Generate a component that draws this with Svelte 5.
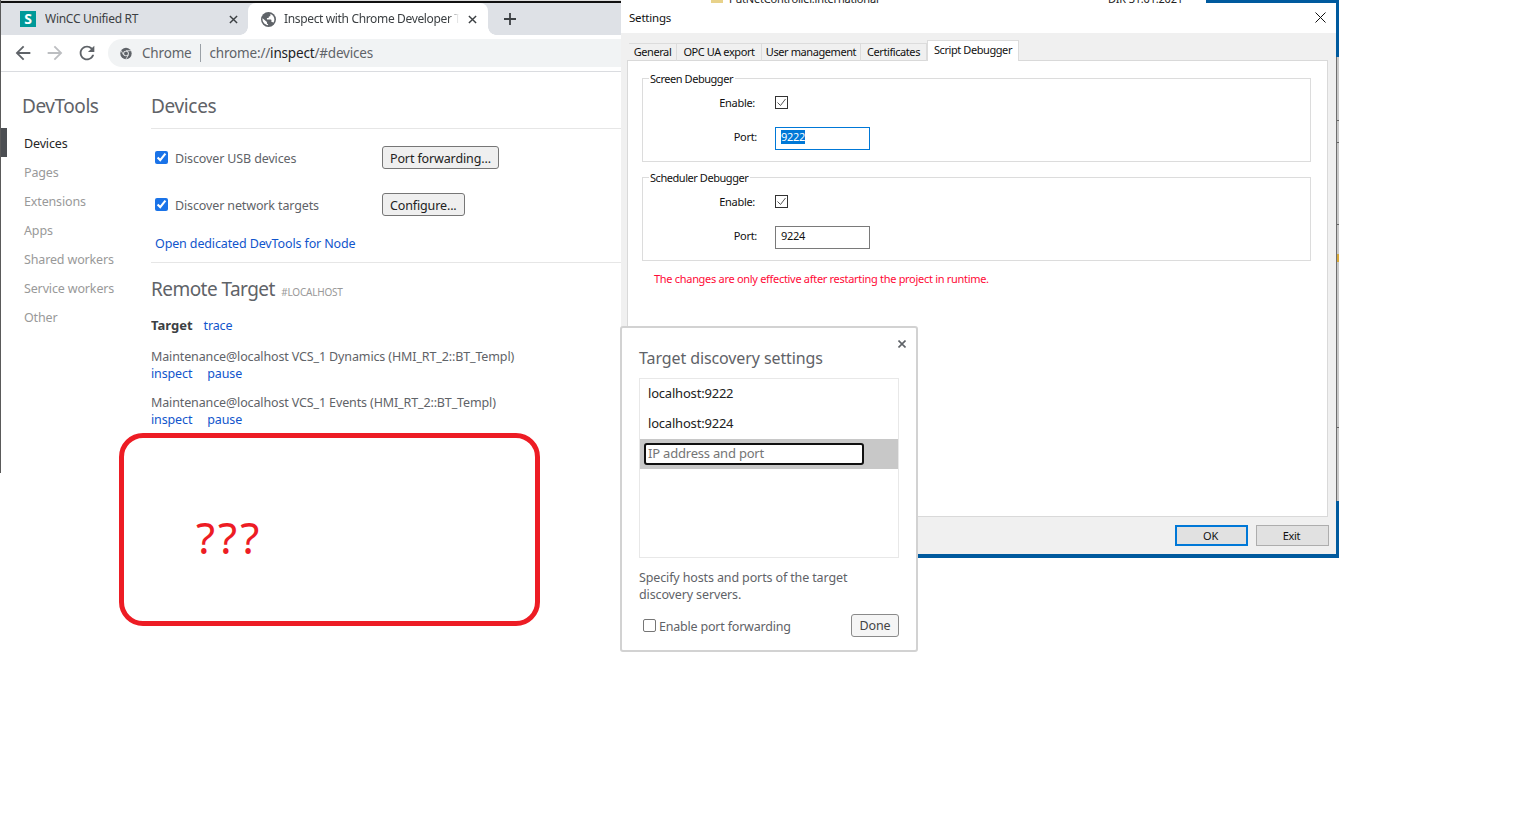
<script>
  const sideItems = ['Devices', 'Pages', 'Extensions', 'Apps', 'Shared workers', 'Service workers', 'Other']
  const tabs = ['General', 'OPC UA export', 'User management', 'Certificates', 'Script Debugger']
  const targets = [
    'Maintenance@localhost VCS_1 Dynamics (HMI_RT_2::BT_Templ)',
    'Maintenance@localhost VCS_1 Events (HMI_RT_2::BT_Templ)'
  ]
  const debuggers = [
    { name: 'Screen Debugger', port: '9222', focused: true },
    { name: 'Scheduler Debugger', port: '9224', focused: false }
  ]
</script>

<div class="desktop">
  <div class="backdrop">
    <span class="folder"></span>
    <span class="cut-name">PutNetController.lnternational</span>
    <span class="cut-date">DIR 31.01.2021</span>
    <span class="cut-blue"></span>
  </div>
  <div class="edge">
    <div class="edge-blue top"></div>
    <div class="edge-gray"></div>
    <div class="edge-blue bottom"></div>
  </div>

  <section class="chrome">
    <div class="top-line"></div>
    <div class="tabstrip">
      <div class="tab first">
        <span class="favicon">S</span>
        <span class="tab-title">WinCC Unified RT</span>
        <svg class="tab-x" viewBox="0 0 10 10"><path d="M1 1l8 8M9 1l-8 8" /></svg>
      </div>
      <div class="tab active">
        <svg class="globe" viewBox="0 0 24 24">
          <circle cx="12" cy="12" r="12" fill="#5f6368" />
          <path fill="#fff" d="M2.500 10l7 6v1.500c0 1 .8 1.500 1.800 1.500v2c-4.500-.3-8.500-4-8.900-8.500-.1-.9-.1-1.700.1-2.500zM15 3.200c3.700 1.200 6.400 4.700 6.400 8.800 0 2-.6 3.800-1.700 5.300-.4-.8-1.100-1.300-2-1.300h-1v-3c0-.6-.4-1-1-1H9.500V9.500h2c.6 0 1-.4 1-1V7h1c.8 0 1.500-.6 1.500-1.500z" />
        </svg>
        <span class="tab-title fade">Inspect with Chrome Developer Tools</span>
        <svg class="tab-x" viewBox="0 0 10 10"><path d="M1 1l8 8M9 1l-8 8" /></svg>
      </div>
      <svg class="plus" viewBox="0 0 12 12"><path d="M6 0v12M0 6h12" /></svg>
    </div>

    <div class="toolbar">
      <svg class="nav" viewBox="0 0 24 24"><path fill="#5f6368" d="M20 11H7.830l5.590-5.590L12 4l-8 8 8 8 1.410-1.410L7.830 13H20v-2z" /></svg>
      <svg class="nav" viewBox="0 0 24 24"><path fill="#bcbec1" d="M12 4l-1.410 1.410L16.170 11H4v2h12.170l-5.580 5.590L12 20l8-8z" /></svg>
      <svg class="nav" viewBox="0 0 24 24"><path fill="#5f6368" d="M17.650 6.350A7.958 7.958 0 0 0 12 4c-4.420 0-7.990 3.580-7.990 8s3.570 8 7.990 8c3.730 0 6.840-2.550 7.730-6h-2.080A5.990 5.990 0 0 1 12 18c-3.310 0-6-2.690-6-6s2.690-6 6-6c1.660 0 3.140.69 4.220 1.780L13 11h7V4l-2.350 2.350z" /></svg>
      <div class="omnibox">
        <svg class="chrome-logo" viewBox="0 0 16 16">
          <circle cx="8" cy="8" r="6.500" fill="#5f6368" />
          <circle cx="8" cy="8" r="3.200" fill="#f1f3f4" />
          <circle cx="8" cy="8" r="2.200" fill="#5f6368" />
          <path d="M8 4.800h6M5.200 9.600L2.400 4.600M10.800 9.600l-3 5" stroke="#f1f3f4" stroke-width="0.900" fill="none" />
        </svg>
        <span class="scheme">Chrome</span>
        <span class="sep"></span>
        <span class="url">chrome://<b>inspect</b>/#devices</span>
      </div>
    </div>

    <div class="page">
      <nav class="side">
        <h1>DevTools</h1>
        {#each sideItems as item, i}
          <div class="side-item" class:selected={i === 0}>{item}</div>
        {/each}
      </nav>

      <main class="content">
        <h2 class="devices-title">Devices</h2>

        <div class="option first-option">
          <label><input type="checkbox" checked /><span>Discover USB devices</span></label>
          <button>Port forwarding...</button>
        </div>
        <div class="option second-option">
          <label><input type="checkbox" checked /><span>Discover network targets</span></label>
          <button>Configure...</button>
        </div>
        <div class="node-link"><span class="link">Open dedicated DevTools for Node</span></div>

        <h2 class="remote-title">Remote Target <small>#LOCALHOST</small></h2>
        <div class="target-head"><b>Target</b><span class="link">trace</span></div>
        {#each targets as target}
          <div class="target">
            <div>{target}</div>
            <div class="actions"><span class="link">inspect</span><span class="link">pause</span></div>
          </div>
        {/each}
      </main>
    </div>
  </section>

  <section class="settings">
    <header class="titlebar">
      <span>Settings</span>
      <svg viewBox="0 0 11 11"><path d="M.5.5l10 10M10.500.5l-10 10" /></svg>
    </header>
    <div class="settings-body">
      <div class="tabs">
        {#each tabs as tab, i}
          <div class="win-tab" class:current={i === tabs.length - 1}>{tab}</div>
        {/each}
      </div>
      <div class="panel">
        {#each debuggers as dbg}
          <div class="group">
            <span class="legend">{dbg.name}</span>
            <div class="form">
              <span class="enable-label">Enable:</span>
              <svg class="win-check" viewBox="0 0 13 13">
                <rect x="0.500" y="0.500" width="12" height="12" fill="#fff" stroke="#333" />
                <path d="M2.500 6.500l3 3 5-6.500" fill="none" stroke="#555" />
              </svg>
              <span class="port-label">Port:</span>
              <div class="port" class:focused={dbg.focused}><span>{dbg.port}</span></div>
            </div>
          </div>
        {/each}
        <p class="note">The changes are only effective after restarting the project in runtime.</p>
      </div>
      <footer class="win-footer">
        <button class="win-btn default">OK</button>
        <button class="win-btn">Exit</button>
      </footer>
    </div>
  </section>

  <div class="callout">???</div>

  <aside class="discovery">
    <svg class="close" viewBox="0 0 8 8"><path d="M.5.5l7 7M7.500.5l-7 7" /></svg>
    <h3>Target discovery settings</h3>
    <div class="hosts">
      <div class="host">localhost:9222</div>
      <div class="host">localhost:9224</div>
      <div class="host-new"><div class="fake-input">IP address and port</div></div>
    </div>
    <p class="help">Specify hosts and ports of the target discovery servers.</p>
    <div class="discovery-foot">
      <label><span class="empty-check"></span><span class="forward-text">Enable port forwarding</span></label>
      <button>Done</button>
    </div>
  </aside>
</div>

<style>
  :global(body) {
    margin: 0;
    background: #fff;
  }

  .desktop {
    position: relative;
    width: 1535px;
    height: 820px;
    overflow: hidden;
    font-family: "Noto Sans", sans-serif;
    background: #fff;
  }

  /* bits of the desktop behind the windows */
  .backdrop {
    position: absolute;
    left: 621px;
    top: 0;
    width: 718px;
    height: 3px;
    overflow: hidden;
    background: #fff;
    font-size: 11px;
    letter-spacing: -0.2px;
    line-height: 14px;
    color: #222;
  }

  .folder {
    position: absolute;
    left: 90px;
    top: 0;
    width: 12px;
    height: 3px;
    background: #e8d28a;
  }

  .cut-name {
    position: absolute;
    left: 108px;
    top: -8px;
  }

  .cut-date {
    position: absolute;
    left: 487px;
    top: -8px;
  }

  .cut-blue {
    position: absolute;
    left: 585px;
    top: 0;
    right: 0;
    height: 3px;
    background: #005a9e;
  }

  .edge {
    position: absolute;
    left: 1336px;
    top: 0;
    width: 3px;
    height: 558px;
    display: flex;
    flex-direction: column;
  }

  .edge-blue {
    background: #005a9e;
  }

  .edge-blue.top {
    height: 57px;
  }

  .edge-blue.bottom {
    height: 57px;
  }

  .edge-gray {
    flex: 1;
    border-left: 1px solid #6e6e6e;
    background:
      linear-gradient(#666, #666) 0 63px / 100% 1px no-repeat,
      linear-gradient(#666, #666) 0 85px / 100% 1px no-repeat,
      linear-gradient(#666, #666) 0 167px / 100% 1px no-repeat,
      linear-gradient(#d8a93a, #d8a93a) 0 197px / 100% 8px no-repeat,
      linear-gradient(#666, #666) 0 370px / 100% 1px no-repeat,
      #c9c9c9;
  }

  /* browser window */
  .chrome {
    position: absolute;
    left: 0;
    top: 0;
    width: 621px;
    height: 473px;
    box-sizing: border-box;
    border-left: 1px solid #5a5a5a;
    background: #fff;
    overflow: hidden;
  }

  .top-line {
    height: 3px;
    box-sizing: border-box;
    border-top: 1px solid #ddd;
    background: #111;
  }

  .tabstrip {
    display: flex;
    align-items: stretch;
    height: 32px;
    background: #dee1e6;
    font-size: 12px;
    color: #3c4043;
  }

  .tab {
    display: flex;
    align-items: center;
    box-sizing: border-box;
  }

  .tab.first {
    width: 247px;
    padding-left: 19px;
  }

  .tab.active {
    position: relative;
    width: 240px;
    padding-left: 13px;
    background: #fff;
    border-radius: 8px 8px 0 0;
  }

  .tab.active::before,
  .tab.active::after {
    content: "";
    position: absolute;
    bottom: 0;
    width: 8px;
    height: 8px;
    background: radial-gradient(circle at 0 0, #dee1e6 7.500px, #fff 8px);
  }

  .tab.active::before {
    left: -8px;
  }

  .tab.active::after {
    right: -8px;
    background: radial-gradient(circle at 100% 0, #dee1e6 7.500px, #fff 8px);
  }

  .favicon {
    width: 16px;
    height: 16px;
    margin-right: 9px;
    background: #009999;
    color: #fff;
    font-weight: 700;
    font-size: 14px;
    line-height: 16px;
    text-align: center;
  }

  .tab-title {
    white-space: nowrap;
    overflow: hidden;
    line-height: 16px;
    padding-bottom: 1px;
    letter-spacing: -0.28px;
  }

  .tab.first .tab-title {
    width: 182px;
  }

  .fade {
    width: 175px;
    letter-spacing: -0.35px;
    -webkit-mask-image: linear-gradient(90deg, #000 94%, transparent 100%);
    mask-image: linear-gradient(90deg, #000 94%, transparent 100%);
  }

  .tab-x {
    width: 9px;
    height: 9px;
    margin-left: 2px;
    fill: none;
    stroke: #3c4043;
    stroke-width: 1.600;
  }

  .tab.active .tab-x {
    margin-left: 9px;
  }

  .globe {
    width: 15px;
    height: 15px;
    margin-right: 8px;
  }

  .plus {
    width: 12px;
    height: 12px;
    margin: 10px 0 0 16px;
    fill: none;
    stroke: #3c4043;
    stroke-width: 1.800;
  }

  .toolbar {
    display: flex;
    align-items: center;
    box-sizing: border-box;
    height: 37px;
    padding: 4px 0 4px 11px;
    border-bottom: 1px solid #dadce0;
  }

  .nav {
    width: 22px;
    height: 22px;
    margin-right: 10px;
    flex: none;
  }

  .omnibox {
    display: flex;
    align-items: center;
    flex: 1;
    height: 28px;
    padding-left: 11px;
    border-radius: 14px 0 0 14px;
    background: #f1f3f4;
    font-size: 13.500px;
    letter-spacing: -0.18px;
    color: #5f6368;
  }

  .chrome-logo {
    width: 14px;
    height: 15px;
    margin-right: 9px;
  }

  .sep {
    width: 1px;
    height: 18px;
    margin: 0 9px 0 8px;
    background: #9aa0a6;
  }

  .url b {
    font-weight: 400;
    color: #202124;
  }

  .page {
    display: grid;
    grid-template-columns: 150px 1fr;
  }

  .side h1 {
    margin: 0;
    height: 56px;
    padding: 20px 0 0 21px;
    box-sizing: border-box;
    font-weight: 400;
    font-size: 19px;
    letter-spacing: -0.45px;
    line-height: 28px;
    color: #5f6368;
  }

  .side-item {
    height: 29px;
    padding-left: 23px;
    font-size: 12.500px;
    letter-spacing: -0.15px;
    line-height: 32px;
    color: #999;
    box-sizing: border-box;
  }

  .side-item.selected {
    padding-left: 17px;
    border-left: 6px solid #4c4f53;
    color: #262626;
  }

  .content {
    font-size: 12.500px;
    letter-spacing: -0.13px;
    color: #5f6368;
    overflow: hidden;
  }

  .devices-title {
    margin: 0;
    height: 57px;
    padding-top: 20px;
    box-sizing: border-box;
    border-bottom: 1px solid #e6e6e6;
    font-weight: 400;
    font-size: 19px;
    letter-spacing: -0.35px;
    line-height: 28px;
    color: #5f6368;
  }

  .option {
    display: grid;
    grid-template-columns: 231px auto;
    justify-content: start;
    align-items: center;
    height: 23px;
    padding-left: 0;
  }

  .first-option {
    margin-top: 17px;
  }

  .second-option {
    margin-top: 24px;
  }

  .option label {
    display: flex;
    align-items: center;
    padding-left: 4px;
  }

  .option label span {
    padding-top: 2px;
  }

  .option input {
    width: 13px;
    height: 13px;
    margin: 0 7px 0 0;
    accent-color: #1a73e8;
  }

  .option button {
    height: 23px;
    padding: 2px 7px 0;
    border: 1px solid #767676;
    border-radius: 3px;
    background: #efefef;
    font: inherit;
    letter-spacing: inherit;
    color: #222;
  }

  .link {
    color: #1155cc;
  }

  .node-link {
    margin-top: 19px;
    padding-left: 4px;
    line-height: 18px;
    border-bottom: 1px solid #e6e6e6;
    box-sizing: border-box;
    height: 28px;
  }

  .remote-title {
    margin: 12px 0 0;
    height: 29px;
    font-weight: 400;
    font-size: 19px;
    letter-spacing: -0.55px;
    line-height: 28px;
    color: #5f6368;
  }

  .remote-title small {
    margin-left: 2px;
    font-size: 10px;
    letter-spacing: -0.2px;
    color: #999;
  }

  .target-head {
    display: flex;
    gap: 11px;
    height: 18px;
    margin-top: 12px;
    line-height: 18px;
  }

  .target-head b {
    font-size: 13px;
    letter-spacing: 0;
    color: #3c4043;
  }

  .target-head .link {
    line-height: 20px;
  }

  .target {
    margin-top: 14px;
    line-height: 17px;
  }

  .target + .target {
    margin-top: 12px;
  }

  .actions {
    display: flex;
    gap: 15px;
  }

  /* windows dialog */
  .settings {
    position: absolute;
    left: 621px;
    top: 3px;
    width: 715px;
    height: 555px;
    box-sizing: border-box;
    border-bottom: 4px solid #005a9e;
    display: flex;
    flex-direction: column;
    font-size: 11px;
    letter-spacing: -0.3px;
    color: #111;
    background: #f0f0f0;
  }

  .titlebar {
    display: flex;
    align-items: center;
    justify-content: space-between;
    flex: none;
    box-sizing: border-box;
    height: 30px;
    padding: 0 10px 2px 8px;
    background: #fff;
    font-size: 11.500px;
    letter-spacing: -0.2px;
  }

  .titlebar svg {
    width: 11px;
    height: 11px;
    fill: none;
    stroke: #111;
  }

  .settings-body {
    flex: 1;
    padding-top: 7px;
  }

  .tabs {
    display: grid;
    grid-template-columns: 48px 85px 99px 66px 92px;
    align-items: end;
    height: 21px;
    margin-left: 8px;
    margin-bottom: -1px;
    position: relative;
    letter-spacing: -0.42px;
  }

  .win-tab {
    box-sizing: border-box;
    height: 18px;
    border: 1px solid #dcdcdc;
    border-bottom: 0;
    border-left: 0;
    line-height: 15px;
    text-align: center;
    white-space: nowrap;
  }

  .win-tab.current {
    height: 21px;
    border-left: 1px solid #dcdcdc;
    background: #fff;
    line-height: 17px;
  }

  .panel {
    box-sizing: border-box;
    height: 457px;
    margin: 0 8px 0 6px;
    padding: 17px 16px 0 14px;
    border: 1px solid #d9d9d9;
    background: #fff;
  }

  .group {
    position: relative;
    box-sizing: border-box;
    height: 84px;
    border: 1px solid #dcdcdc;
  }

  .group + .group {
    margin-top: 15px;
  }

  .legend {
    position: absolute;
    left: 6px;
    top: -8px;
    padding: 0 2px 0 1px;
    background: #fff;
    line-height: 16px;
    letter-spacing: -0.45px;
  }

  .form {
    display: grid;
    grid-template-columns: 114px 95px;
    column-gap: 18px;
    row-gap: 18px;
    grid-template-rows: 13px 23px;
    align-items: center;
    padding-top: 17px;
  }

  .enable-label {
    text-align: right;
    padding-right: 2px;
  }

  .port-label {
    text-align: right;
    margin-bottom: 5px;
  }

  .win-check {
    width: 13px;
    height: 13px;
  }

  .port {
    box-sizing: border-box;
    height: 23px;
    padding-left: 5px;
    border: 1px solid #7a7a7a;
    line-height: 18px;
  }

  .port.focused {
    border-color: #0078d7;
  }

  .port.focused span {
    display: inline-block;
    line-height: 14px;
    background: #0078d7;
    color: #fff;
  }

  .note {
    margin: 10px 0 0 12px;
    line-height: 16px;
    color: #ff0a37;
  }

  .win-footer {
    display: flex;
    justify-content: flex-end;
    gap: 8px;
    padding: 8px 7px 0 0;
  }

  .win-btn {
    box-sizing: border-box;
    width: 73px;
    height: 21px;
    padding: 0 2px 0 0;
    border: 1px solid #adadad;
    background: #e1e1e1;
    font: inherit;
    letter-spacing: inherit;
    color: #111;
  }

  .win-btn.default {
    border: 2px solid #0078d7;
  }

  /* annotation drawn over the screenshot */
  .callout {
    position: absolute;
    left: 119px;
    top: 433px;
    width: 421px;
    height: 193px;
    box-sizing: border-box;
    padding: 69px 0 0 72px;
    border: 5px solid #ed1c24;
    border-radius: 24px;
    color: #ed1c24;
    font-size: 44px;
    line-height: 60px;
    letter-spacing: 3px;
  }

  /* target discovery popup */
  .discovery {
    position: absolute;
    left: 620px;
    top: 326px;
    width: 298px;
    height: 326px;
    box-sizing: border-box;
    padding: 0 17px;
    border: 2px solid #d2d2d2;
    border-radius: 3px;
    background: #fff;
    font-size: 12.500px;
    letter-spacing: -0.13px;
    color: #5f6368;
  }

  .close {
    position: absolute;
    right: 10px;
    top: 12px;
    width: 8px;
    height: 8px;
    fill: none;
    stroke: #5f6368;
    stroke-width: 1.600;
  }

  .discovery h3 {
    margin: 0;
    padding-top: 18px;
    font-weight: 400;
    font-size: 16px;
    letter-spacing: -0.1px;
    line-height: 24px;
    color: #5f6368;
  }

  .hosts {
    box-sizing: border-box;
    height: 180px;
    margin-top: 8px;
    border: 1px solid #e8e8e8;
  }

  .host {
    height: 30px;
    padding-left: 8px;
    color: #222;
    font-size: 13px;
    letter-spacing: -0.2px;
    line-height: 29px;
  }

  .host-new {
    display: flex;
    align-items: center;
    height: 30px;
    padding-left: 4px;
    background: #c8c8c8;
  }

  .fake-input {
    box-sizing: border-box;
    width: 220px;
    height: 22px;
    padding-left: 2px;
    border: 2px solid #101010;
    border-radius: 3px;
    background: #fff;
    color: #757575;
    font-size: 13px;
    letter-spacing: -0.2px;
    line-height: 16px;
  }

  .help {
    margin: 11px 0 0;
    line-height: 17px;
  }

  .discovery-foot {
    display: flex;
    align-items: center;
    justify-content: space-between;
    margin-top: 11px;
  }

  .discovery-foot label {
    display: flex;
    align-items: center;
    padding-left: 4px;
    letter-spacing: -0.2px;
  }

  .forward-text {
    padding-top: 2px;
  }

  .empty-check {
    width: 11px;
    height: 11px;
    margin-right: 3px;
    border: 1px solid #767676;
    border-radius: 2px;
  }

  .discovery-foot button {
    box-sizing: border-box;
    width: 48px;
    height: 23px;
    padding: 0;
    border: 1px solid #8a8a8a;
    border-radius: 3px;
    background: #f5f5f5;
    font: inherit;
    letter-spacing: inherit;
    color: #444;
  }
</style>
